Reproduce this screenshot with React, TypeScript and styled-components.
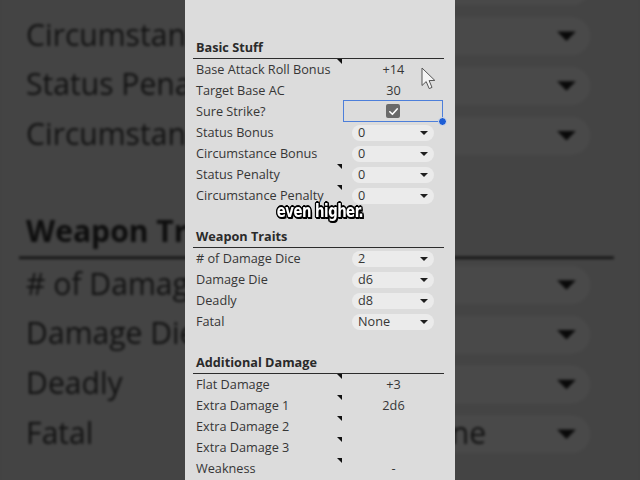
import React from "react";
import styled, { createGlobalStyle } from "styled-components";

type Row = {
  label: string
  value?: string
  kind?: "text" | "select" | "check"
  note?: boolean
  selected?: boolean
};

type Section = {
  title: string
  rows: Row[]
};

const sections: Section[] = [
  {
    title: "Basic Stuff",
    rows: [
      { label: "Base Attack Roll Bonus", value: "+14", note: true },
      { label: "Target Base AC", value: "30" },
      { label: "Sure Strike?", kind: "check", selected: true },
      { label: "Status Bonus", value: "0", kind: "select" },
      { label: "Circumstance Bonus", value: "0", kind: "select" },
      { label: "Status Penalty", value: "0", kind: "select", note: true },
      { label: "Circumstance Penalty", value: "0", kind: "select", note: true },
    ],
  },
  {
    title: "Weapon Traits",
    rows: [
      { label: "# of Damage Dice", value: "2", kind: "select" },
      { label: "Damage Die", value: "d6", kind: "select" },
      { label: "Deadly", value: "d8", kind: "select" },
      { label: "Fatal", value: "None", kind: "select" },
    ],
  },
  {
    title: "Additional Damage",
    rows: [
      { label: "Flat Damage", value: "+3", note: true },
      { label: "Extra Damage 1", value: "2d6", note: true },
      { label: "Extra Damage 2", value: "", note: true },
      { label: "Extra Damage 3", value: "", note: true },
      { label: "Weakness", value: "-", note: true },
    ],
  },
];

const GlobalStyle = createGlobalStyle`
  html, body {
    margin: 0;
    padding: 0;
    background: #434343;
  }
`;

const Sheet: React.FC = () => {
  const renderValue = (row: Row) => {
    if (row.kind === "select") {
      return (
        <Select>
          <span>{row.value}</span>
          <Caret />
        </Select>
      );
    } else if (row.kind === "check") {
      return (
        <CheckBox>
          <svg width="11" height="11" viewBox="0 0 12 12">
            <path d="M2 6.3 L4.8 9 L10 3.2" fill="none" stroke="#fff" strokeWidth="1.8" strokeLinecap="round" strokeLinejoin="round" />
          </svg>
        </CheckBox>
      );
    }
    return row.value;
  };

  return (
    <Panel>
      {sections.map((section) => (
        <SectionBlock key={section.title}>
          <HeaderRow>{section.title}</HeaderRow>
          {section.rows.map((row) => (
            <SheetRow key={row.label}>
              <LabelCell>
                {row.label}
                {row.note && <NoteMark />}
              </LabelCell>
              <ValueCell kind={row.kind || "text"} selected={!!row.selected}>
                {renderValue(row)}
                {row.selected && <FillHandle />}
              </ValueCell>
            </SheetRow>
          ))}
        </SectionBlock>
      ))}
    </Panel>
  );
};

const App: React.FC = () => {
  return (
    <Page>
      <GlobalStyle />
      <Backdrop>
        <Sheet />
      </Backdrop>
      <Foreground>
        <Sheet />
      </Foreground>
      <Caption>even higher.</Caption>
      <Pointer>
        <svg width="16" height="24" viewBox="0 0 16 24">
          <path d="M1 1 L1 18.5 L5.2 14.6 L8.2 21.6 L11 20.4 L8.1 13.6 L13.8 13.4 Z" fill="#f4f4f4" stroke="#555" strokeWidth="1" strokeLinejoin="round" />
        </svg>
      </Pointer>
    </Page>
  );
};

export default App;

const Page = styled.div`
  position: relative;
  width: 640px;
  height: 480px;
  overflow: hidden;
  background: #434343;
  font-family: "Open Sans", "Noto Sans", sans-serif;
`;

const Backdrop = styled.div`
  position: absolute;
  inset: 0;
  display: flex;
  justify-content: center;
  transform: scale(2.37);
  transform-origin: 320px 240px;
  filter: brightness(0.31) blur(0.6px);
`;

const Foreground = styled.div`
  position: relative;
  display: flex;
  justify-content: center;
`;

const Panel = styled.div`
  width: 270px;
  height: 480px;
  box-sizing: border-box;
  padding: 38px 11px 0 8px;
  background: #dcdcdc;
  color: #363636;
  font-size: 12.7px;
  line-height: 1;
`;

const SectionBlock = styled.div`
  margin-bottom: 21px;
`;

const HeaderRow = styled.div`
  height: 21px;
  box-sizing: border-box;
  display: flex;
  align-items: center;
  padding: 0 0 1px 3px;
  border-bottom: 1px solid #2c2c2c;
  font-weight: 700;
  color: #2a2a2a;
`;

const SheetRow = styled.div`
  display: grid;
  grid-template-columns: 150px 101px;
  height: 21px;
`;

const LabelCell = styled.div`
  position: relative;
  display: flex;
  align-items: center;
  padding: 0 0 1px 3px;
  white-space: nowrap;
`;

const NoteMark = styled.div`
  position: absolute;
  top: 0;
  right: 1px;
  width: 5px;
  height: 5px;
  background: #111;
  clip-path: polygon(0 0, 100% 0, 100% 100%);
`;

const ValueCell = styled.div<{ kind: string, selected: boolean }>`
  position: relative;
  display: flex;
  align-items: center;
  justify-content: ${props => props.kind === "select" ? "flex-start" : "center"};
  padding-left: ${props => props.kind === "select" ? "9px" : "0"};
  padding-bottom: ${props => props.kind === "text" ? "1px" : "0"};
  box-sizing: border-box;
  border: ${props => props.selected ? "1.5px solid #4d7fda" : "none"};
  margin: ${props => props.selected ? "-1px 1px 0 0" : "0"};
`;

const FillHandle = styled.div`
  position: absolute;
  right: -5px;
  bottom: -5px;
  width: 7px;
  height: 7px;
  border-radius: 50%;
  background: #1d5ed6;
  border: 1px solid #e8e8e8;
`;

const Select = styled.div`
  width: 82px;
  height: 16px;
  box-sizing: border-box;
  display: flex;
  align-items: center;
  justify-content: space-between;
  padding: 0 6px;
  border-radius: 8px;
  background: #ebebeb;
`;

const Caret = styled.div`
  width: 0;
  height: 0;
  border-left: 4px solid transparent;
  border-right: 4px solid transparent;
  border-top: 4px solid #1e1e1e;
`;

const CheckBox = styled.div`
  width: 14px;
  height: 14px;
  border-radius: 2px;
  background: #6a6a6a;
  display: flex;
  align-items: center;
  justify-content: center;
`;

const Caption = styled.div`
  position: absolute;
  top: 200px;
  left: 0;
  right: 0;
  text-align: center;
  font-family: "Liberation Sans Narrow", "DejaVu Sans Condensed", sans-serif;
  font-weight: 700;
  font-size: 18px;
  letter-spacing: -0.6px;
  color: #ffffff;
  transform: scaleX(0.82);
  text-shadow:
    1.6px 0 0 #000, -1.6px 0 0 #000, 0 1.6px 0 #000, 0 -1.6px 0 #000,
    1.3px 1.3px 0 #000, -1.3px 1.3px 0 #000, 1.3px -1.3px 0 #000, -1.3px -1.3px 0 #000,
    2px 2px 0 #000;
`;

const Pointer = styled.div`
  position: absolute;
  left: 421px;
  top: 67px;
  width: 16px;
  height: 24px;
`;
